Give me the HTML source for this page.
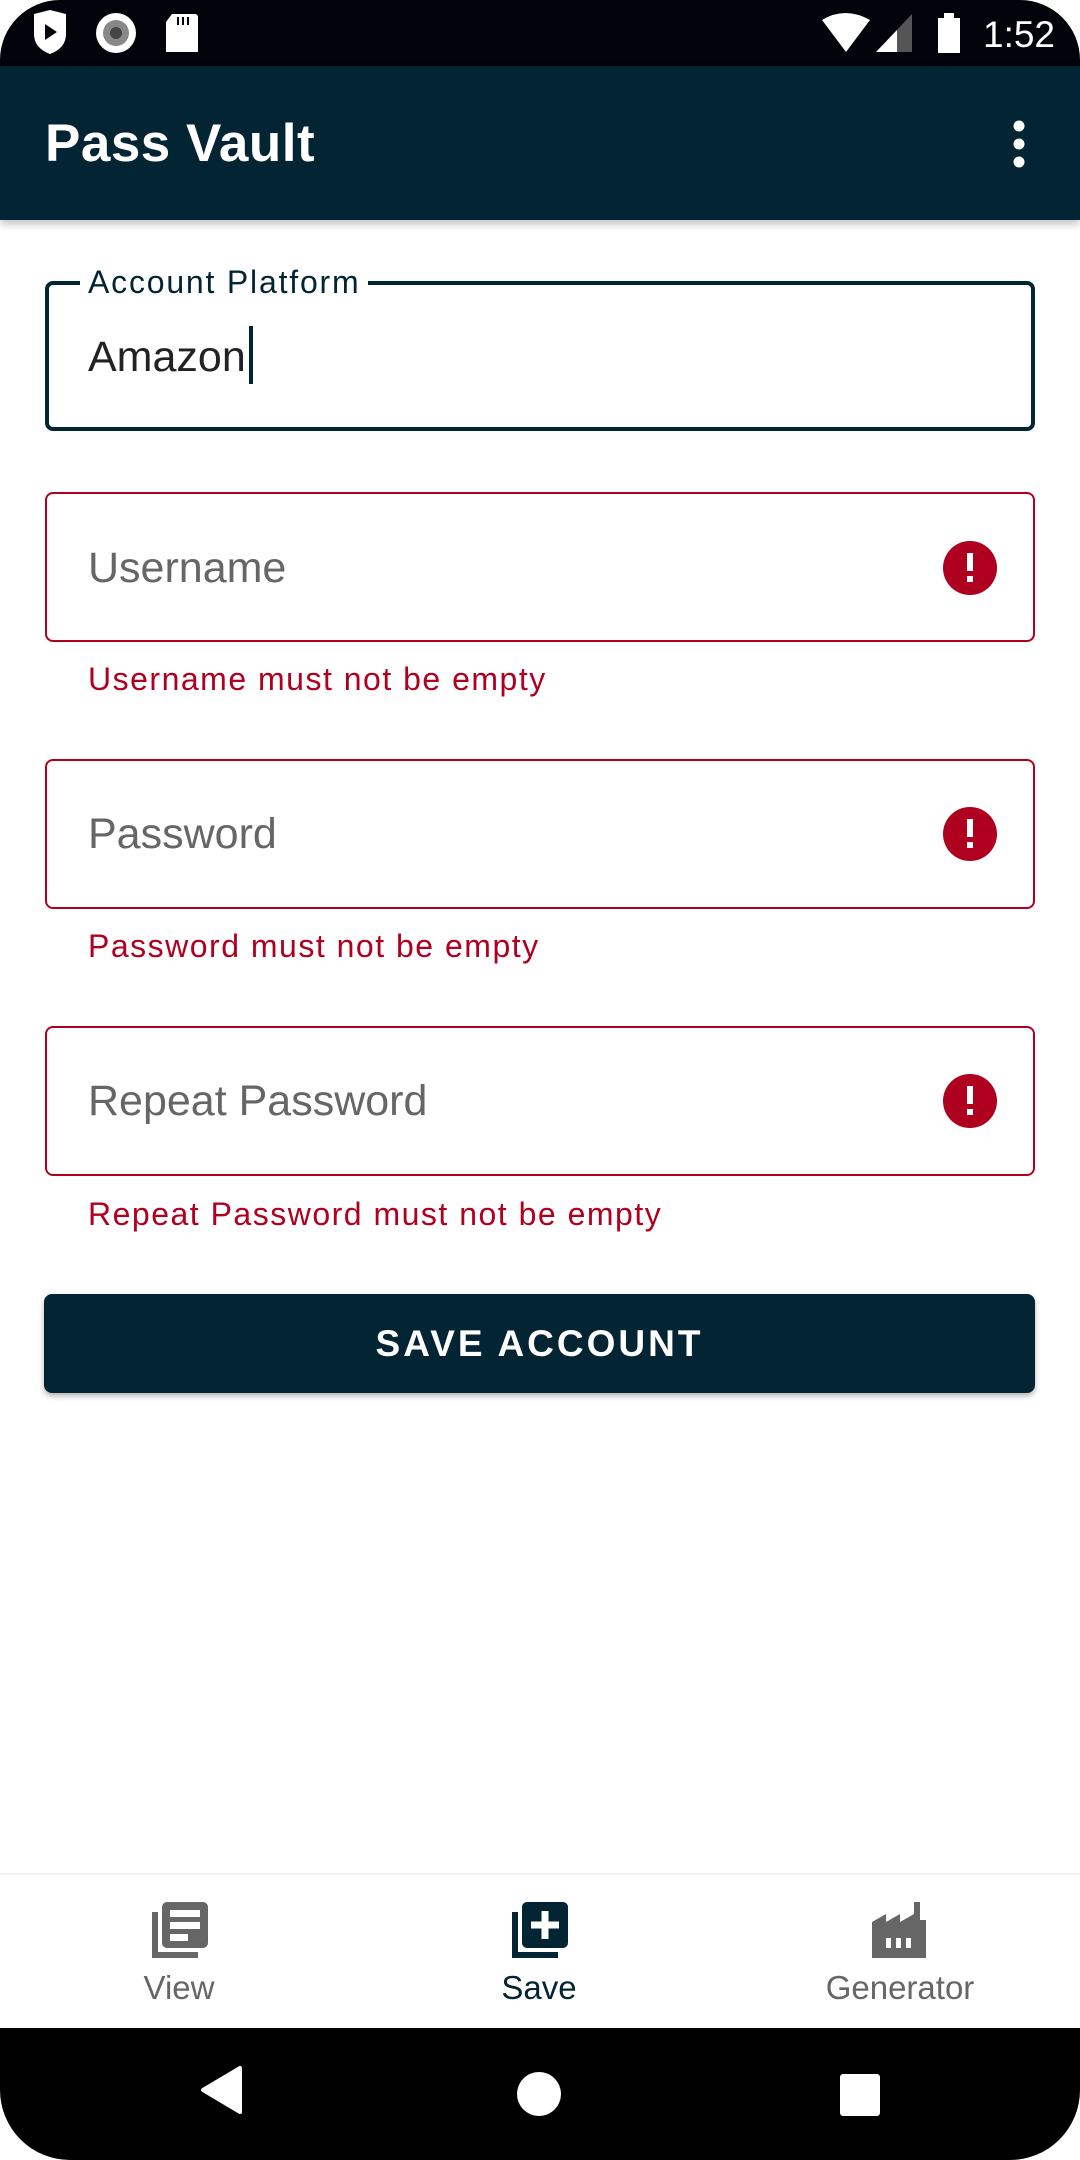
<!DOCTYPE html>
<html><head><meta charset="utf-8"><style>
*{margin:0;padding:0;box-sizing:border-box}
body{width:1080px;height:2160px;position:relative;background:#fff;font-family:"Liberation Sans",sans-serif;overflow:hidden}
.abs{position:absolute}
.status{left:0;top:0;width:1080px;height:66px;background:#02020a;border-radius:60px 60px 0 0}
.appbar{left:0;top:66px;width:1080px;height:154px;background:#032433;box-shadow:0 4px 8px rgba(0,0,0,.25)}
.title{left:45px;top:116px;color:#fff;font-size:53px;font-weight:bold;line-height:56px;letter-spacing:0.5px}
.field{left:45px;width:990px;height:150px;border-radius:8px}
.f1{top:281px;border:4px solid #032433}
.err{border:2px solid #b00020}
.ph{left:88px;font-size:43px;color:#666;line-height:50px}
.etxt{left:88px;font-size:32px;color:#b00020;line-height:36px;letter-spacing:1.5px}
.ico{width:54px;height:54px;border-radius:50%;background:#b00020;left:943px}
.ico:before{content:"";position:absolute;left:24px;top:12px;width:6px;height:18px;background:#fff}
.ico:after{content:"";position:absolute;left:24px;top:35px;width:6px;height:6px;background:#fff}
.btn{left:44px;top:1294px;width:991px;height:99px;background:#032433;border-radius:8px;box-shadow:0 3px 6px rgba(0,0,0,.3);color:#fff;font-size:37px;font-weight:bold;letter-spacing:3px;text-align:center;line-height:99px}
.nav{left:0;top:1873px;width:1080px;height:155px;background:#fff;border-top:2px solid #f2f2f2}
.lbl{top:1968px;font-size:33px;color:#666;text-align:center;width:300px;line-height:40px}
.sys{left:0;top:2028px;width:1080px;height:132px;background:#000;border-radius:0 0 70px 70px}
</style></head><body>
<div class="abs status"></div>
<svg class="abs" style="left:0;top:0" width="1080" height="66" viewBox="0 0 1080 66">
<path d="M34 14 L50 10 L66 14 L66 34 Q66 48 50 54 Q34 48 34 34 Z" fill="#fff"/>
<path d="M45 24 L57 32 L45 40 Z" fill="#02020a"/>
<circle cx="116" cy="33" r="20" fill="#fff"/><circle cx="116" cy="33" r="13" fill="#888"/><circle cx="116" cy="33" r="6" fill="#444"/>
<path d="M172 14 L196 14 L198 16 L198 52 L166 52 L166 22 Z" fill="#fff"/>
<path d="M178 17v8M183 17v8M188 17v8" stroke="#02020a" stroke-width="2"/>
<path d="M822 20 Q845 6 870 20 L846 52 Z" fill="#fff"/>
<path d="M876 52 L912 14 L912 52 Z" fill="#555"/><path d="M876 52 L897 30 L897 52 Z" fill="#fff"/>
<rect x="938" y="18" width="22" height="35" fill="#fff"/><rect x="944" y="13" width="10" height="6" fill="#fff"/>
<text x="983" y="47" fill="#fff" font-size="37" font-family="Liberation Sans">1:52</text>
</svg>
<div class="abs appbar"></div>
<div class="abs title">Pass Vault</div>
<svg class="abs" style="left:1008px;top:120px" width="22" height="48"><circle cx="11" cy="6" r="5.5" fill="#fff"/><circle cx="11" cy="24" r="5.5" fill="#fff"/><circle cx="11" cy="42" r="5.5" fill="#fff"/></svg>

<div class="abs field f1"></div>
<div class="abs" style="left:80px;top:262px;background:#fff;padding:0 8px;font-size:32px;color:#032433;line-height:40px;letter-spacing:1.8px">Account Platform</div>
<div class="abs" style="left:88px;top:332px;font-size:43px;color:#222;line-height:50px">Amazon</div>
<div class="abs" style="left:249px;top:326px;width:4px;height:58px;background:#032433"></div>

<div class="abs field err" style="top:492px"></div>
<div class="abs ph" style="top:543px">Username</div>
<div class="abs ico" style="top:541px"></div>
<div class="abs etxt" style="top:661px">Username must not be empty</div>

<div class="abs field err" style="top:759px"></div>
<div class="abs ph" style="top:809px">Password</div>
<div class="abs ico" style="top:807px"></div>
<div class="abs etxt" style="top:928px">Password must not be empty</div>

<div class="abs field err" style="top:1026px"></div>
<div class="abs ph" style="top:1076px">Repeat Password</div>
<div class="abs ico" style="top:1074px"></div>
<div class="abs etxt" style="top:1196px">Repeat Password must not be empty</div>

<div class="abs btn">SAVE ACCOUNT</div>

<div class="abs nav"></div>
<svg class="abs" style="left:150px;top:1900px" width="60" height="60" viewBox="0 0 60 60">
<path d="M2 12 V58 H48 V52 H8 V12 Z" fill="#666"/>
<rect x="12" y="2" width="46" height="46" rx="5" fill="#666"/>
<rect x="20" y="10" width="30" height="7" fill="#fff"/><rect x="20" y="22" width="30" height="7" fill="#fff"/><rect x="20" y="34" width="18" height="7" fill="#fff"/>
</svg>
<svg class="abs" style="left:510px;top:1900px" width="60" height="60" viewBox="0 0 60 60">
<path d="M2 12 V58 H48 V52 H8 V12 Z" fill="#032433"/>
<rect x="12" y="2" width="46" height="46" rx="5" fill="#032433"/>
<path d="M35 11 V39 M21 25 H49" stroke="#fff" stroke-width="7"/>
</svg>
<svg class="abs" style="left:870px;top:1900px" width="60" height="60" viewBox="0 0 60 60">
<path d="M2 58 V22 L16 14 V22 L30 14 V22 L44 14 V2 H50 V20 L56 20 V58 Z" fill="#666"/>
<rect x="16" y="38" width="5" height="10" fill="#fff"/><rect x="26" y="38" width="5" height="10" fill="#fff"/><rect x="36" y="38" width="5" height="10" fill="#fff"/>
</svg>
<div class="abs lbl" style="left:29px">View</div>
<div class="abs lbl" style="left:389px;color:#032433">Save</div>
<div class="abs lbl" style="left:750px">Generator</div>

<div class="abs sys"></div>
<svg class="abs" style="left:0;top:2028px" width="1080" height="132">
<path d="M240 40 L240 84 L203 62 Z" fill="#fff" stroke="#fff" stroke-width="4" stroke-linejoin="round"/>
<circle cx="539" cy="66" r="22" fill="#fff"/>
<rect x="840" y="46" width="40" height="42" rx="3" fill="#fff"/>
</svg>
</body></html>
